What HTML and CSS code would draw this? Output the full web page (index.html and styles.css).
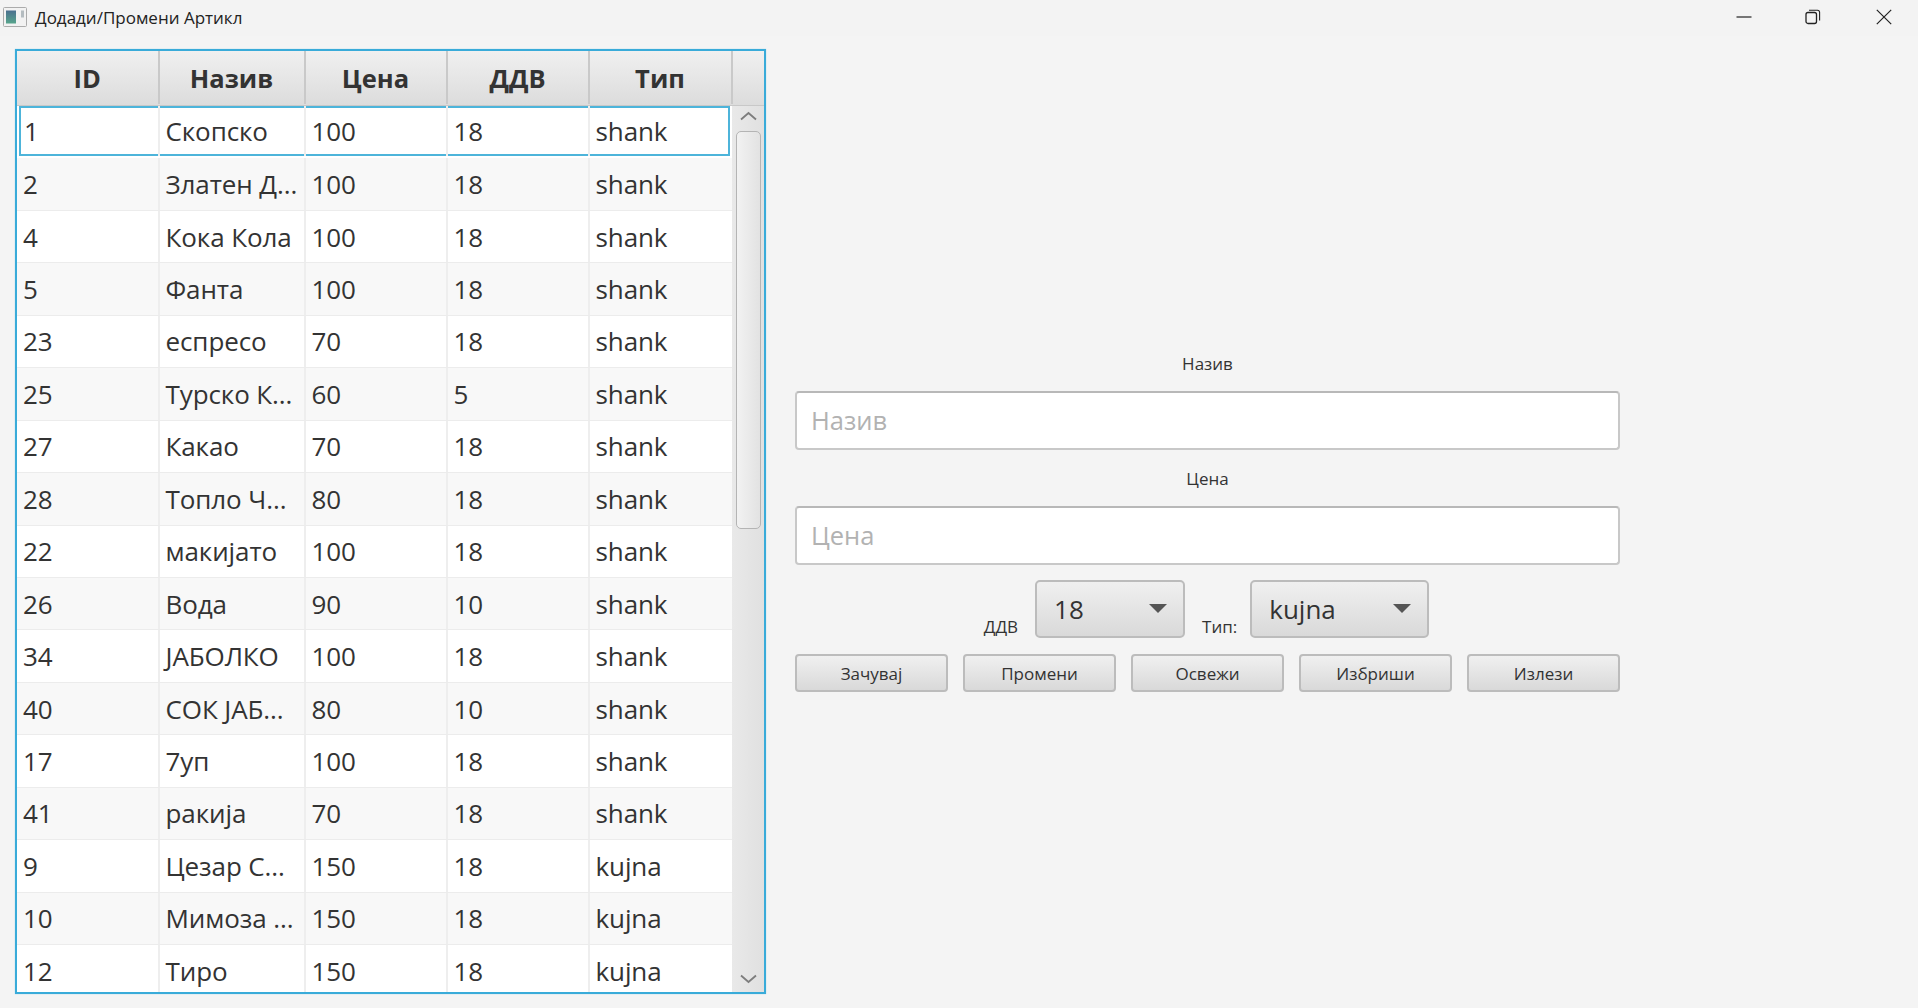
FILE: index.html
```html
<!DOCTYPE html>
<html lang="mk">
<head>
  <meta charset="UTF-8">
  <title>Додади/Промени Артикл</title>
  <link rel="stylesheet" href="styles.css">
</head>
<body>
  <!-- Title bar -->
  <div class="titlebar">
    <svg class="app-icon" width="24" height="20" viewBox="0 0 24 20">
      <defs>
        <linearGradient id="iconFill" x1="0" y1="0" x2="0" y2="1">
          <stop offset="0" stop-color="#4a6f8f"/>
          <stop offset="1" stop-color="#57a58c"/>
        </linearGradient>
      </defs>
      <rect x="0.5" y="0.5" width="23" height="19" rx="1" fill="#f2f2f2" stroke="#ababab"/>
      <rect x="3" y="3.5" width="10" height="13" fill="url(#iconFill)"/>
      <rect x="18" y="3.5" width="3" height="7" fill="#b4bcc0"/>
    </svg>
    <span class="title">Додади/Промени Артикл</span>
    <div class="win-controls">
      <svg width="16" height="16" viewBox="0 0 16 16"><path d="M0.5 8H15.5" fill="none" stroke="#222" stroke-width="1.2"/></svg>
      <svg width="16" height="16" viewBox="0 0 16 16"><rect x="1" y="3.5" width="10.5" height="11" rx="2" fill="none" stroke="#222" stroke-width="1.3"/><path d="M4 1.2H12.5Q14.6 1.2 14.6 3.3V11.5" fill="none" stroke="#222" stroke-width="1.1"/></svg>
      <svg width="16" height="16" viewBox="0 0 16 16"><path d="M0.8 0.8L15.2 15.2M15.2 0.8L0.8 15.2" fill="none" stroke="#222" stroke-width="1.2"/></svg>
    </div>
  </div>

  <div class="main">
    <!-- Articles table -->
    <div class="table-box">
      <div class="thead">
        <div class="th c1">ID</div>
        <div class="th c2">Назив</div>
        <div class="th c3">Цена</div>
        <div class="th c4">ДДВ</div>
        <div class="th c5">Тип</div>
        <div class="th corner"></div>
      </div>
      <div class="tbody">
        <div class="rows">
          <div class="row focused"><div class="td c1">1</div><div class="td c2">Скопско</div><div class="td c3">100</div><div class="td c4">18</div><div class="td c5">shank</div></div>
          <div class="row"><div class="td c1">2</div><div class="td c2">Златен Д...</div><div class="td c3">100</div><div class="td c4">18</div><div class="td c5">shank</div></div>
          <div class="row"><div class="td c1">4</div><div class="td c2">Кока Кола</div><div class="td c3">100</div><div class="td c4">18</div><div class="td c5">shank</div></div>
          <div class="row"><div class="td c1">5</div><div class="td c2">Фанта</div><div class="td c3">100</div><div class="td c4">18</div><div class="td c5">shank</div></div>
          <div class="row"><div class="td c1">23</div><div class="td c2">еспресо</div><div class="td c3">70</div><div class="td c4">18</div><div class="td c5">shank</div></div>
          <div class="row"><div class="td c1">25</div><div class="td c2">Турско К...</div><div class="td c3">60</div><div class="td c4">5</div><div class="td c5">shank</div></div>
          <div class="row"><div class="td c1">27</div><div class="td c2">Какао</div><div class="td c3">70</div><div class="td c4">18</div><div class="td c5">shank</div></div>
          <div class="row"><div class="td c1">28</div><div class="td c2">Топло Ч...</div><div class="td c3">80</div><div class="td c4">18</div><div class="td c5">shank</div></div>
          <div class="row"><div class="td c1">22</div><div class="td c2">макијато</div><div class="td c3">100</div><div class="td c4">18</div><div class="td c5">shank</div></div>
          <div class="row"><div class="td c1">26</div><div class="td c2">Вода</div><div class="td c3">90</div><div class="td c4">10</div><div class="td c5">shank</div></div>
          <div class="row"><div class="td c1">34</div><div class="td c2">ЈАБОЛКО</div><div class="td c3">100</div><div class="td c4">18</div><div class="td c5">shank</div></div>
          <div class="row"><div class="td c1">40</div><div class="td c2">СОК ЈАБ...</div><div class="td c3">80</div><div class="td c4">10</div><div class="td c5">shank</div></div>
          <div class="row"><div class="td c1">17</div><div class="td c2">7уп</div><div class="td c3">100</div><div class="td c4">18</div><div class="td c5">shank</div></div>
          <div class="row"><div class="td c1">41</div><div class="td c2">ракија</div><div class="td c3">70</div><div class="td c4">18</div><div class="td c5">shank</div></div>
          <div class="row"><div class="td c1">9</div><div class="td c2">Цезар С...</div><div class="td c3">150</div><div class="td c4">18</div><div class="td c5">kujna</div></div>
          <div class="row"><div class="td c1">10</div><div class="td c2">Мимоза ...</div><div class="td c3">150</div><div class="td c4">18</div><div class="td c5">kujna</div></div>
          <div class="row"><div class="td c1">12</div><div class="td c2">Тиро</div><div class="td c3">150</div><div class="td c4">18</div><div class="td c5">kujna</div></div>
        </div>
        <div class="scrollbar">
          <svg class="arrow" width="17" height="10" viewBox="0 0 17 10"><path d="M1 8.5L8.5 2L16 8.5" fill="none" stroke="#7d7d7d" stroke-width="1.8"/></svg>
          <div class="thumb"></div>
          <svg class="arrow arrow-down" width="17" height="10" viewBox="0 0 17 10"><path d="M1 1.5L8.5 8L16 1.5" fill="none" stroke="#7d7d7d" stroke-width="1.8"/></svg>
        </div>
      </div>
    </div>

    <!-- Edit form -->
    <div class="form">
      <div class="label">Назив</div>
      <div class="input">Назив</div>
      <div class="label second">Цена</div>
      <div class="input">Цена</div>
      <div class="combo-row">
        <span class="small">ДДВ</span>
        <div class="combo combo-vat"><span>18</span><i class="caret"></i></div>
        <span class="small type-label">Тип:</span>
        <div class="combo combo-type"><span>kujna</span><i class="caret"></i></div>
      </div>
      <div class="buttons">
        <button>Зачувај</button>
        <button>Промени</button>
        <button>Освежи</button>
        <button>Избриши</button>
        <button>Излези</button>
      </div>
    </div>
  </div>
</body>
</html>
```

FILE: styles.css
```css
* {
  box-sizing: border-box;
}
body {
  margin: 0;
  width: 1918px;
  height: 1008px;
  overflow: hidden;
  background: #f4f4f4;
  color: #333;
  font-family: "Open Sans", "Noto Sans", sans-serif;
  display: flex;
  flex-direction: column;
}
.titlebar {
  height: 36px;
  padding-left: 3px;
  display: flex;
  align-items: center;
  background: #f3f3f3;
  flex: none;
}
.app-icon {
  margin-top: -2px;
}
.title {
  margin-left: 8px;
  font-size: 17px;
  color: #222;
  margin-top: -1px;
}
.win-controls {
  margin-left: auto;
  margin-right: 26px;
  margin-top: -3px;
  display: flex;
  gap: 53px;
}
.win-controls svg:last-child {
  margin-left: 2px;
}
.main {
  flex: 1;
  min-height: 0;
  display: flex;
  padding: 13px 0 14px 15px;
}

/* table */
.table-box {
  width: 751px;
  display: flex;
  flex-direction: column;
  border: 2px solid #39abd9;
  box-shadow: 0 0 1px #8fd0e8;
  background: #fff;
  overflow: hidden;
}
.thead {
  display: flex;
  height: 55px;
  flex: none;
  padding-bottom: 1px;
  background: linear-gradient(#f0f0f0, #dcdcdc);
  border-bottom: 1px solid #c8c8c8;
}
.th {
  flex: none;
  display: flex;
  align-items: center;
  justify-content: center;
  font-size: 25.5px;
  font-weight: 700;
  border-right: 2px solid #c9c9c9;
}
.corner {
  flex: 1;
  border-right: 0;
}
.c1 { width: 142.5px; }
.c2 { width: 146px; }
.c3 { width: 142px; }
.c4 { width: 142px; }
.c5 { width: 143px; }
.tbody {
  flex: 1;
  min-height: 0;
  display: flex;
}
.rows {
  width: 715px;
  flex: none;
  overflow: hidden;
}
.row {
  display: flex;
  height: 52.44px;
  background: #fff;
  border-bottom: 1px solid #ececec;
}
.row:nth-child(even) {
  background: #f8f8f8;
}
.row.focused {
  height: 50px;
  box-shadow: inset 0 0 0 2px #4db4da;
  margin: 0 2px 2.44px;
  border-bottom: 0;
}
.row.focused .c1 {
  width: 140.5px;
  padding-left: 5px;
}
.td {
  flex: none;
  display: flex;
  align-items: center;
  padding-left: 6px;
  font-size: 26px;
  letter-spacing: -0.1px;
  border-right: 2px solid #eeeeee;
  white-space: nowrap;
  overflow: hidden;
}
.td.c5 {
  flex: 1;
  min-width: 0;
  border-right: 0;
}
.scrollbar {
  flex: 1;
  display: flex;
  flex-direction: column;
  align-items: center;
  padding-top: 5px;
  background: linear-gradient(90deg, #e9e9e9, #e0e0e0);
}
.arrow {
  flex: none;
}
.thumb {
  width: 25px;
  height: 398px;
  margin-top: 10px;
  border: 1px solid #b4b4b4;
  border-radius: 5px;
  background: linear-gradient(90deg, #f2f2f2, #e2e2e2);
}
.arrow-down {
  margin-top: auto;
  margin-bottom: 8px;
}

/* form */
.form {
  width: 825px;
  margin-left: 29px;
  padding-top: 2px;
  display: flex;
  flex-direction: column;
  justify-content: center;
}
.label {
  font-size: 17px;
  line-height: 22px;
  text-align: center;
  margin-bottom: 16px;
}
.label.second {
  margin-top: 18px;
}
.input {
  height: 59px;
  padding: 0 0 2px 14px;
  display: flex;
  align-items: center;
  font-size: 25.5px;
  color: #b2b2b2;
  background: #fff;
  border: 2px solid #c8c8c8;
  border-top-color: #b8b8b8;
  border-radius: 4px;
}
.combo-row {
  display: flex;
  justify-content: center;
  align-items: flex-end;
  margin-top: 15px;
}
.small {
  font-size: 17px;
  line-height: 22px;
}
.type-label {
  margin-left: 17px;
  margin-right: 13px;
}
.combo {
  height: 58px;
  padding: 0 16px 1px 17px;
  display: flex;
  align-items: center;
  justify-content: space-between;
  font-size: 26px;
  border: 2px solid #bcbcbc;
  border-radius: 5px;
  background: linear-gradient(#f0f0f0, #d9d9d9);
}
.combo-vat {
  width: 150px;
  margin-left: 17px;
}
.combo-type {
  width: 179px;
  margin-right: 2px;
}
.caret {
  width: 0;
  height: 0;
  border-left: 9px solid transparent;
  border-right: 9px solid transparent;
  border-top: 9px solid #555;
}
.buttons {
  display: flex;
  gap: 15px;
  margin-top: 16px;
}
.buttons button {
  flex: 1;
  height: 38px;
  font-family: inherit;
  font-size: 17px;
  color: #333;
  border: 2px solid #bcbcbc;
  border-radius: 4px;
  background: linear-gradient(#f0f0f0, #d9d9d9);
}
```
